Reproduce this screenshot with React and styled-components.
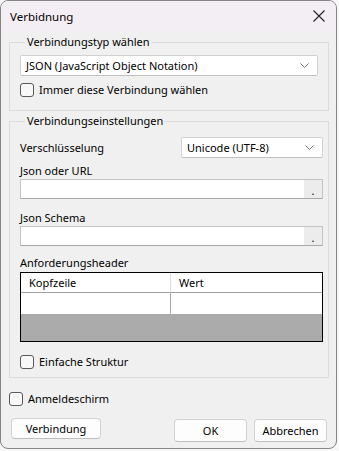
import React from "react";
import styled, { createGlobalStyle } from "styled-components";

const GlobalStyle = createGlobalStyle`
  html, body {
    margin: 0;
    padding: 0;
    background: #f7f7f7;
  }
  body {
    font-family: "Noto Sans", "Open Sans", sans-serif;
    font-size: 11px;
    color: #000;
  }
`;

const Window = styled.div`
  width: 337px;
  height: 449px;
  box-sizing: border-box;
  border: 1px solid #858585;
  border-radius: 8px;
  background: #f0f0f0;
  overflow: hidden;
  display: flex;
  flex-direction: column;
`;

const TitleBar = styled.div`
  flex-shrink: 0;
  height: 30px;
  background: #f3eef3;
  display: flex;
  align-items: center;
  justify-content: space-between;
  padding: 0 10px 0 9px;
  font-size: 11.5px;
`;

const CloseButton = styled.button`
  border: none;
  background: transparent;
  padding: 0;
  width: 14px;
  height: 14px;
  display: flex;
  align-items: center;
  justify-content: center;
`;

const Content = styled.div`
  flex-shrink: 0;
  padding: 3px 7px 0 8px;
  display: flex;
  flex-direction: column;
`;

const Group = styled.fieldset`
  margin: 0 0 ${(p) => p.$gap || 0}px 0;
  border: 1px solid #dcdcdc;
  padding: ${(p) => (p.$tight ? "8px 5px 7px 10px" : "5px 10px 12px 10px")};
  display: flex;
  flex-direction: column;

  legend {
    padding: 0 2px;
    margin-left: 5px;
    line-height: 16px;
  }
`;

const Select = styled.div`
  box-sizing: border-box;
  height: 21px;
  width: ${(p) => (p.$width ? p.$width + "px" : "100%")};
  background: #fff;
  border: 1px solid #d2d2d2;
  border-bottom-color: #c0c0c0;
  border-radius: 2px;
  display: flex;
  align-items: center;
  justify-content: space-between;
  padding: 0 8px 0 5px;
`;

const CheckRow = styled.label`
  display: flex;
  align-items: center;
  gap: 5px;
  line-height: 16px;
  margin-top: ${(p) => p.$top || 0}px;
`;

const Box = styled.span`
  box-sizing: border-box;
  width: 14px;
  height: 14px;
  border: 1px solid #5a5a5a;
  border-radius: 3px;
  background: #f8f8f8;
`;

const Row = styled.div`
  display: flex;
  align-items: center;
  justify-content: space-between;
`;

const FieldLabel = styled.div`
  line-height: 16px;
  margin-top: ${(p) => p.$top || 0}px;
`;

const PathInput = styled.div`
  box-sizing: border-box;
  height: 20px;
  background: #fff;
  border: 1px solid #c4c4c4;
  border-bottom-color: #a8a8a8;
  display: flex;
  justify-content: flex-end;
`;

const DotButton = styled.div`
  width: 18px;
  background: #ececec;
  display: flex;
  align-items: flex-end;
  justify-content: center;
  line-height: 14px;
  font-size: 11px;
`;

const Table = styled.div`
  box-sizing: border-box;
  margin-top: 1px;
  height: 70px;
  border: 1px solid #000;
  background: #ababab;
  display: grid;
  grid-template-columns: 150px 1fr;
  grid-template-rows: 20px 22px;
`;

const Cell = styled.div`
  background: #fff;
  border-bottom: 1px solid ${(p) => (p.$head ? "#a0a0a0" : "#a8a8a8")};
  border-right: ${(p) =>
    p.$last ? "none" : `1px solid ${p.$head ? "#dcdcdc" : "#a8a8a8"}`};
  padding-left: ${(p) => (p.$head ? 8 : 0)}px;
  line-height: 19px;
`;

const Footer = styled.div`
  display: flex;
  align-items: flex-start;
  margin-top: 11px;
  padding: 0 2px 0 2px;
`;

const Button = styled.button`
  box-sizing: border-box;
  height: ${(p) => (p.$tall ? 23 : 21)}px;
  width: ${(p) => p.$width}px;
  margin-top: ${(p) => (p.$tall ? 1 : 0)}px;
  margin-left: ${(p) => p.$left || 0}px;
  font: inherit;
  color: #000;
  background: #fdfdfd;
  border: 1px solid #d3d3d3;
  border-bottom-color: #bdbdbd;
  border-radius: 4px;
  padding: 0;
`;

const Chevron = () => (
  <svg width="9" height="5" viewBox="0 0 9 5">
    <path d="M0.5 0.5 L4.5 4.5 L8.5 0.5" fill="none" stroke="#666" strokeWidth="0.9" />
  </svg>
);

export default function App() {
  return (
    <>
      <GlobalStyle />
      <Window>
        <TitleBar>
          <span>Verbidnung</span>
          <CloseButton>
            <svg width="12" height="12" viewBox="0 0 12 12">
              <path d="M0.5 0.5 L11.5 11.5 M11.5 0.5 L0.5 11.5" stroke="#222" strokeWidth="1.1" />
            </svg>
          </CloseButton>
        </TitleBar>
        <Content>
          <Group $gap={2}>
            <legend>Verbindungstyp wählen</legend>
            <Select>
              <span>JSON (JavaScript Object Notation)</span>
              <Chevron />
            </Select>
            <CheckRow $top={6}>
              <Box />
              <span>Immer diese Verbindung wählen</span>
            </CheckRow>
          </Group>
          <Group $tight>
            <legend>Verbindungseinstellungen</legend>
            <Row>
              <span>Verschlüsselung</span>
              <Select $width={142}>
                <span>Unicode (UTF-8)</span>
                <Chevron />
              </Select>
            </Row>
            <FieldLabel $top={5}>Json oder URL</FieldLabel>
            <PathInput>
              <DotButton>.</DotButton>
            </PathInput>
            <FieldLabel $top={11}>Json Schema</FieldLabel>
            <PathInput>
              <DotButton>.</DotButton>
            </PathInput>
            <FieldLabel $top={9}>Anforderungsheader</FieldLabel>
            <Table>
              <Cell $head>Kopfzeile</Cell>
              <Cell $head $last>Wert</Cell>
              <Cell />
              <Cell $last />
            </Table>
            <CheckRow $top={12}>
              <Box />
              <span>Einfache Struktur</span>
            </CheckRow>
          </Group>
          <CheckRow $top={13}>
            <Box />
            <span>Anmeldeschirm</span>
          </CheckRow>
          <Footer>
            <Button $width={90}>Verbindung</Button>
            <Button $tall $width={73} $left={73}>OK</Button>
            <Button $tall $width={73} $left={7}>Abbrechen</Button>
          </Footer>
        </Content>
      </Window>
    </>
  );
}
